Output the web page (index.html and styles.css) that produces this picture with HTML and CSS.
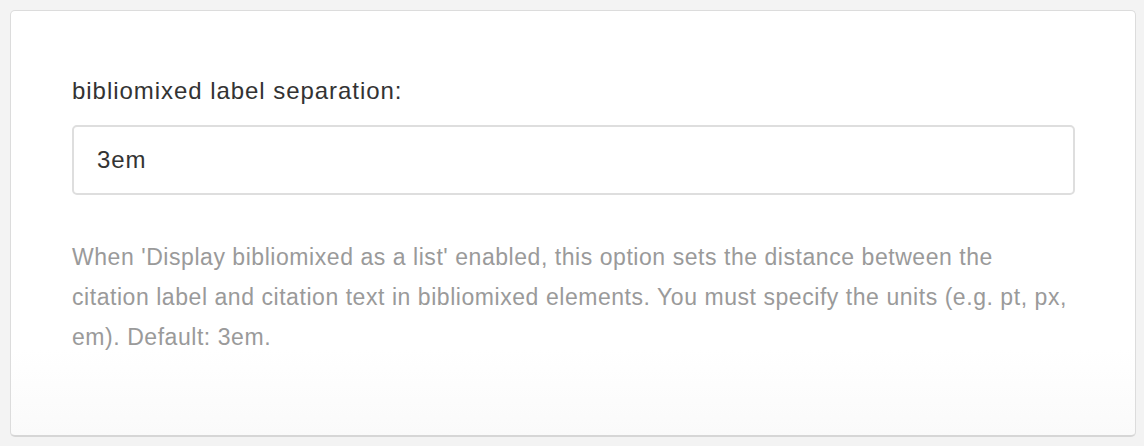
FILE: index.html
```html
<!DOCTYPE html>
<html>
<head>
<meta charset="utf-8">
<link rel="stylesheet" href="styles.css">
</head>
<body>
<div class="card">
  <label class="label" for="sep">bibliomixed label separation:</label>
  <input class="field" id="sep" type="text" value="3em">
  <p class="help">When 'Display bibliomixed as a list' enabled, this option sets the distance between the citation label and citation text in bibliomixed elements. You must specify the units (e.g. pt, px, em). Default: 3em.</p>
</div>
</body>
</html>
```

FILE: styles.css
```css
html, body {
  margin: 0;
  padding: 0;
  background: #f3f3f3;
}
body {
  padding: 10px 8px 9px 10px;
  font-family: "Liberation Sans", Arial, Helvetica, sans-serif;
}
.card {
  box-sizing: border-box;
  width: 1126px;
  height: 427px;
  background: linear-gradient(to bottom, #ffffff 0%, #ffffff 80%, #fafafa 100%);
  border: 1px solid #dcdcdc;
  border-bottom: 2px solid #d6d6d6;
  border-radius: 5px;
  padding: 65px 61px 0 61px;
  display: flex;
  flex-direction: column;
}
.label {
  display: block;
  font-size: 24px;
  line-height: 30px;
  letter-spacing: 0.95px;
  color: #333333;
  margin: 0 0 19px 0;
}
.field {
  box-sizing: border-box;
  width: 1003px;
  height: 70px;
  flex: none;
  border: 2px solid #dedede;
  border-radius: 5px;
  padding: 0 23px;
  font-family: "Liberation Sans", Arial, Helvetica, sans-serif;
  font-size: 24px;
  letter-spacing: 0.95px;
  color: #333333;
  background: #ffffff;
  outline: none;
}
.help {
  margin: 42px 0 0 0;
  font-size: 23px;
  line-height: 40px;
  letter-spacing: 0.55px;
  color: #9a9a9a;
}
```
